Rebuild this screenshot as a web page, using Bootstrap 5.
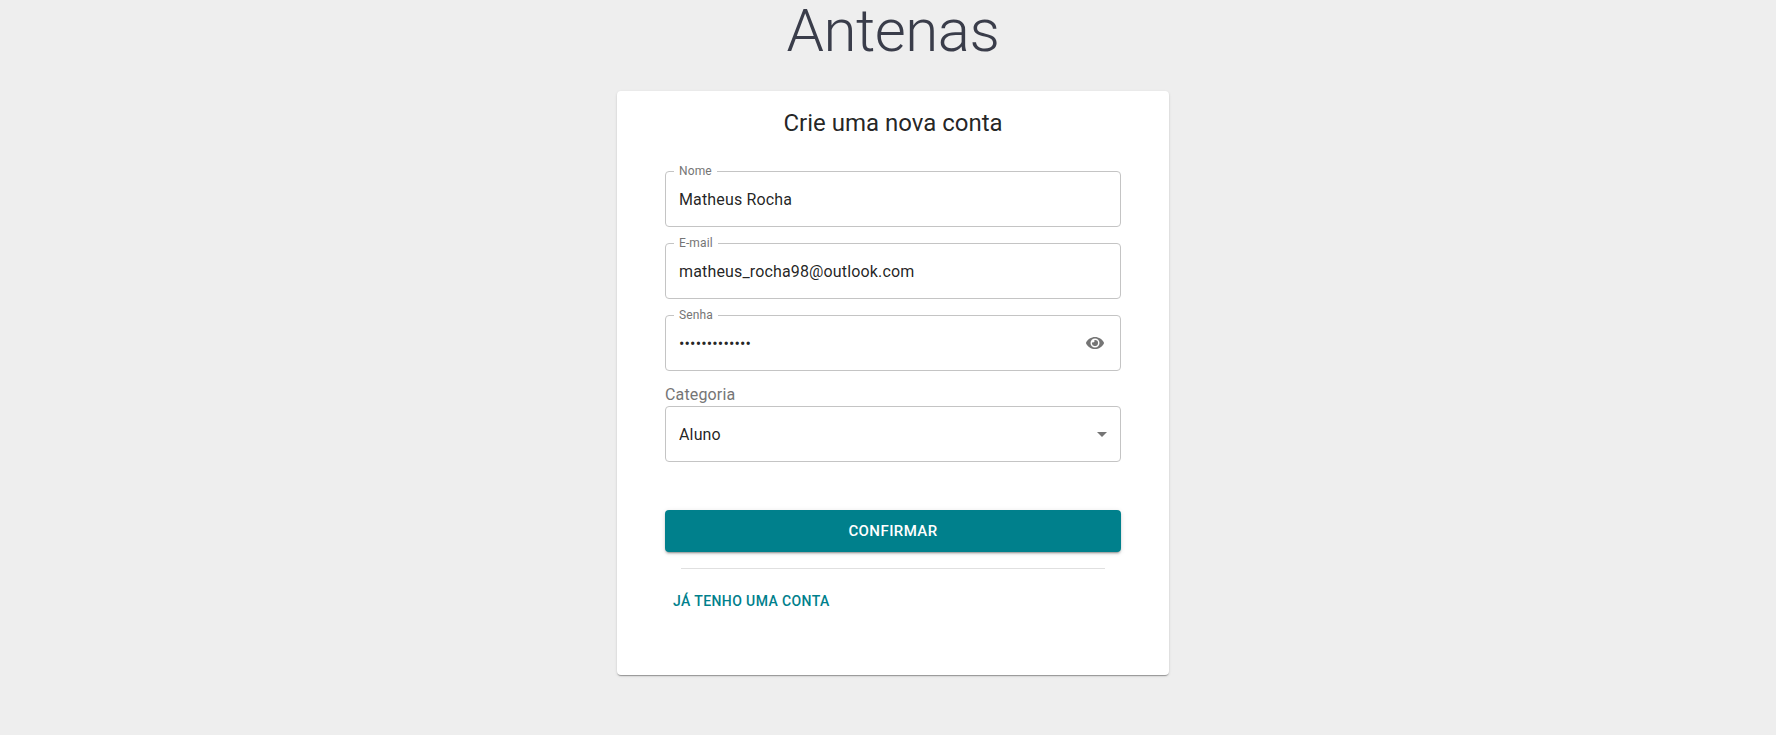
<!DOCTYPE html>
<html lang="pt-BR">
<head>
<meta charset="utf-8">
<meta name="viewport" content="width=device-width, initial-scale=1">
<title>Antenas</title>
<link href="https://cdn.jsdelivr.net/npm/bootstrap@5.3.0/dist/css/bootstrap.min.css" rel="stylesheet">
<style>
  body { background: #eee; font-family: Roboto, sans-serif; color: rgba(0,0,0,.87); height: 100vh; padding-left: 10px; -webkit-font-smoothing: antialiased; }
  .brand-title { font-size: 60px; font-weight: 300; line-height: 62px; letter-spacing: -.00833em; color: #3a3d4a; margin: 0 0 29px; }
  .signup { width: 552px; height: 584px; border-radius: 4px; padding: 16px 48px; box-shadow: 0 2px 1px -1px rgba(0,0,0,.2), 0 1px 1px 0 rgba(0,0,0,.14), 0 1px 3px 0 rgba(0,0,0,.12); }
  .signup h2 { font-size: 24px; font-weight: 400; line-height: 32px; margin: 0 0 32px; }
  .field { height: 56px; margin-bottom: 16px; }
  .field .form-control, .field .form-select { height: 56px; padding: 0 13px; border: 1px solid #c4c4c4; border-radius: 4px; color: rgba(0,0,0,.87); font-size: 16px; letter-spacing: .00938em; background-color: #fff; background-image: none; }
  .field .form-select { padding-top: 1px; }
  .field label { position: absolute; top: -8px; left: 9px; padding: 0 5px; background: #fff; font-size: 12px; line-height: 16px; letter-spacing: .00938em; color: #757575; }
  .field svg { position: absolute; fill: #757575; pointer-events: none; }
  .eye { width: 18px; height: 16px; right: 17px; top: 20px; }
  .arrow { width: 24px; height: 24px; right: 7px; top: 16px; }
  .category { color: #757575; font-size: 16px; line-height: 16px; padding-bottom: 3px; letter-spacing: .00938em; }
  .confirm { height: 42px; margin-top: 48px; padding: 0; border: 0; border-radius: 4px; background: #00808c; color: #fff; font-size: 15px; font-weight: 500; letter-spacing: .02857em; box-shadow: 0 3px 1px -2px rgba(0,0,0,.2), 0 2px 2px 0 rgba(0,0,0,.14), 0 1px 5px 0 rgba(0,0,0,.12); }
  .divider { border: 0; height: 1px; margin: 16px; background: #e0e0e0; opacity: 1; }
  .signin { padding: 6px 8px; border: 0; font-size: 14px; font-weight: 500; line-height: 24.5px; letter-spacing: .02857em; color: #00808c; margin-top: -2px; }
</style>
</head>
<body class="d-flex flex-column align-items-center">
  <h1 class="brand-title flex-shrink-0">Antenas</h1>
  <main class="signup bg-white flex-shrink-0">
    <h2 class="text-center">Crie uma nova conta</h2>
    <form>
      <div class="field position-relative">
        <input class="form-control" id="name" type="text" value="Matheus Rocha">
        <label for="name">Nome</label>
      </div>
      <div class="field position-relative">
        <input class="form-control" id="email" type="text" value="matheus_rocha98@outlook.com">
        <label for="email">E-mail</label>
      </div>
      <div class="field position-relative">
        <input class="form-control" id="password" type="password" value="senhasegura98">
        <label for="password">Senha</label>
        <svg class="eye" viewBox="0 0 576 512"><path d="M572.52 241.4C518.29 135.59 410.93 64 288 64S57.68 135.64 3.48 241.41a32.35 32.35 0 0 0 0 29.19C57.71 376.41 165.07 448 288 448s230.32-71.64 284.52-177.41a32.35 32.35 0 0 0 0-29.19zM288 400a144 144 0 1 1 144-144 143.93 143.93 0 0 1-144 144zm0-240a95.31 95.31 0 0 0-25.31 3.79 47.85 47.85 0 0 1-66.9 66.9A95.78 95.78 0 1 0 288 160z"/></svg>
      </div>
      <div class="category">Categoria</div>
      <div class="field position-relative mb-0">
        <select class="form-select" aria-label="Categoria"><option>Aluno</option></select>
        <svg class="arrow" viewBox="0 0 24 24"><path d="M7 10l5 5 5-5z"/></svg>
      </div>
      <button class="btn confirm w-100 text-uppercase" type="button">Confirmar</button>
      <hr class="divider">
      <button class="btn signin text-uppercase" type="button">Já tenho uma conta</button>
    </form>
  </main>
<script src="https://cdn.jsdelivr.net/npm/bootstrap@5.3.0/dist/js/bootstrap.bundle.min.js"></script>
</body>
</html>
